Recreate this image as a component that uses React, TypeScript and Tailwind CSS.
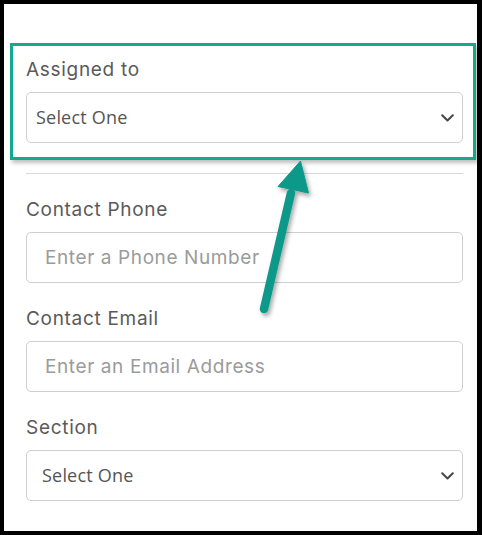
import React from "react"

const label = "text-[19px] leading-[28px] tracking-[0.7px] text-[#5a5a5a] font-['Inter','Open_Sans',sans-serif]"
const field = "h-[51px] w-full rounded-[5px] border border-[#cfcfcf] bg-white"

const Chevron = () => (
  <svg width="13" height="8" viewBox="0 0 13 8" fill="none">
    <path d="M1.2 1.2l5.3 5.3 5.3-5.3" stroke="#474747" strokeWidth="2" strokeLinecap="round" strokeLinejoin="round" />
  </svg>
)

const FakeSelect = ({ bg, pad }: { bg: string; pad: string }) => (
  <div className={`flex items-center justify-between pr-[8px] ${pad} ${field} ${bg}`}>
    <span className="text-[18px] tracking-[0.2px] text-[#555] font-['Open_Sans','Liberation_Sans',sans-serif]">Select One</span>
    <Chevron />
  </div>
)

const TextField = ({ placeholder }: { placeholder: string }) => (
  <input
    placeholder={placeholder}
    className={`${field} pl-[18px] text-[19px] tracking-[0.6px] outline-none placeholder:text-[#9b9b9b] font-['Inter','Open_Sans',sans-serif]`}
  />
)

export default function App() {
  return (
    <div className="relative box-border h-[535px] w-[482px] border-t-4 border-b-4 border-l-4 border-r-[5px] border-black bg-white pt-[39px]">
      {/* highlighted field */}
      <div className="ml-[6px] mr-[1px] border-[3px] border-[#14a98b] pl-[13px] pr-[10px] pt-[10px] pb-[14px] shadow-[2px_3px_4px_rgba(0,0,0,0.25)]">
        <div className={label}>Assigned to</div>
        <div className="mt-[8px]">
          <FakeSelect bg="bg-[#fcf5e1]" pad="pl-[9px]" />
        </div>
      </div>

      <div className="pl-[22px] pr-[14px]">
        <div className="mt-[13px] h-px bg-[#d9d9d9]" />

        <div className="mt-[22px] flex flex-col gap-[8px]">
          <div className={label}>Contact Phone</div>
          <TextField placeholder="Enter a Phone Number" />
        </div>

        <div className="mt-[22px] flex flex-col gap-[8px]">
          <div className={label}>Contact Email</div>
          <TextField placeholder="Enter an Email Address" />
        </div>

        <div className="mt-[22px] flex flex-col gap-[8px]">
          <div className={label}>Section</div>
          <FakeSelect bg="" pad="pl-[15px]" />
        </div>
      </div>

      {/* annotation arrow */}
      <svg className="pointer-events-none absolute left-[-4px] top-[-4px]" width="482" height="535" viewBox="0 0 482 535">
        <defs>
          <filter id="sh" x="-50%" y="-50%" width="200%" height="200%">
            <feDropShadow dx="2" dy="3" stdDeviation="2" floodColor="#000" floodOpacity="0.35" />
          </filter>
        </defs>
        <g filter="url(#sh)" fill="#10998a" stroke="#10998a">
          <line x1="264" y1="309" x2="291" y2="193" strokeWidth="8.5" strokeLinecap="round" />
          <polygon points="300.5,161 278,186.5 308.5,193" strokeWidth="1" strokeLinejoin="round" />
        </g>
      </svg>
    </div>
  )
}
